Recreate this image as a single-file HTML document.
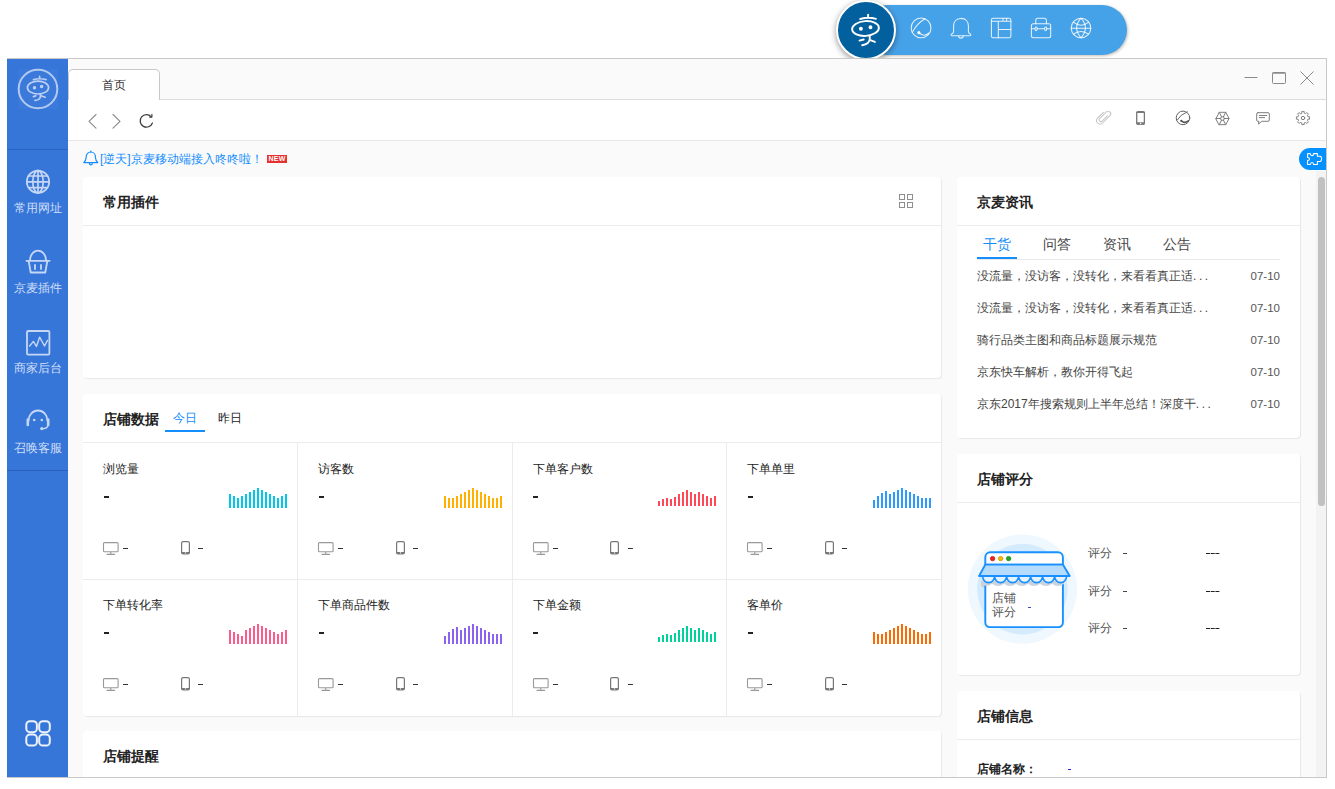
<!DOCTYPE html>
<html lang="zh">
<head>
<meta charset="utf-8">
<title>京麦工作台</title>
<style>
*{box-sizing:border-box;margin:0;padding:0}
html,body{width:1335px;height:789px;overflow:hidden;background:#fff}
body{font-family:"Liberation Sans",sans-serif;font-size:12px;color:#333;position:relative}
.a{position:absolute}
svg{display:block;overflow:visible}
/* floating pill */
#pill{left:862px;top:5px;width:265px;height:50px;border-radius:25px;background:#46a2e8;box-shadow:1px 1px 3px rgba(90,70,40,.35)}
#ball{left:836px;top:-.2px;width:60px;height:60px;border-radius:50%;background:#03609e;border:2.300px solid #fff;box-shadow:0 2px 6px rgba(0,0,0,.42)}
/* window */
#win{left:7px;top:58px;width:1320px;height:720px;overflow:hidden;background:#fafafa}
#pg{left:-7px;top:-58px;width:1335px;height:789px}
#side{left:7px;top:58px;width:61px;height:720px;background:#3776d9}
.lbl{left:7px;width:61px;text-align:center;color:#d0dff8;font-size:12px;line-height:14px;white-space:nowrap}
.ln{background:#c9c9c9}
#tabs{left:68px;top:59px;width:1258px;height:41px;background:#fafafa;border-bottom:1px solid #dcdcdc}
#tab{left:68px;top:69px;width:92px;height:31px;background:#fff;border:1px solid #c8c8c8;border-bottom:none;border-radius:5px 5px 0 0;text-align:center;line-height:31px;font-size:12px;color:#333}
#bar{left:68px;top:100px;width:1258px;height:41px;background:#fff;border-bottom:1px solid #e6e6e6}
.card{background:#fff;border-radius:4px;box-shadow:1px 1px 1px rgba(0,0,0,.075)}
.hd{font-weight:bold;font-size:14px;color:#222;line-height:16px;white-space:nowrap}
.hl{height:1px;background:#ececec}
.vl{width:1px;background:#ececec}
.t{white-space:nowrap;line-height:14px}
</style>
</head>
<body>
<div class="a" id="pill"></div>
<div class="a" id="ball"></div>

<svg class="a" style="left:837px;top:0" width="300" height="60" viewBox="837 0 300 60" fill="none" stroke="#fff" stroke-linecap="round" stroke-linejoin="round">
  <!-- mascot -->
  <g stroke-width="1.9">
    <ellipse cx="865.5" cy="28.5" rx="13.4" ry="7.4" transform="rotate(-4 865.5 28.5)"/>
    <path d="M868.1 14.8v1.8M860.2 19q8-2.4 15.8-.2"/>
    <path d="M869.6 36q.8 4.6-1.8 7-2 1.8-5.6 2.2M859.5 40.6l4.2-1.1M870.3 40.1l4.6 1.8"/>
    <circle cx="860.9" cy="28.8" r="1" fill="#fff"/><circle cx="870.5" cy="27.3" r="1" fill="#fff"/>
  </g>
  <g stroke-width="1.050" stroke-opacity=".85">
    <!-- comet -->
    <circle cx="921.1" cy="27.9" r="9.9"/>
    <path d="M925 18.7Q916.300 23.800 912.300 32.600"/>
    <path d="M918.9 32.6q5 5 10.2.4"/>
    <circle cx="918.900" cy="32.700" r="1.600" fill="#fff" stroke="none"/>
    <!-- bell -->
    <path d="M961 18.4c-4.6 0-7.4 3.2-7.4 7.6v5.6c0 1.2-.6 1.8-1.6 2.2-1.2.5-1.2 2 .2 2h17.6c1.4 0 1.4-1.5.2-2-1-.4-1.6-1-1.6-2.2v-5.600c0-4.400-2.800-7.600-7.400-7.600z"/>
    <path d="M958.600 36a2.400 2.100 0 0 0 4.800 0"/>
    <!-- layout -->
    <rect x="991.400" y="18.300" width="19.500" height="19.400" rx="1.800"/>
    <path d="M991.400 21.300h19.500M998.300 21.300v16.400M998.300 29.400h12.600M1003 18.300v3M1006.600 18.300v3"/>
    <!-- briefcase -->
    <rect x="1031.400" y="23.700" width="19.300" height="14" rx="2"/>
    <path d="M1035.800 23.700v-3.400a2 2 0 0 1 2-2h6.600a2 2 0 0 1 2 2v3.400"/>
    <path d="M1031.400 28.800h3.600M1037.200 28.800h7.400M1046.800 28.800h3.900"/>
    <ellipse cx="1036.100" cy="28.800" rx="1.100" ry="1.900"/><ellipse cx="1045.700" cy="28.800" rx="1.100" ry="1.900"/>
    <!-- globe -->
    <circle cx="1081" cy="28" r="9.800"/>
    <path d="M1081 18.200Q1072.200 28 1081 37.800Q1089.800 28 1081 18.200z"/>
    <path d="M1071.200 28.300h19.600M1073.300 22.200Q1081 28.400 1088.700 22.200M1073.300 34.100Q1081 28.800 1088.700 34.100"/>
  </g>
</svg>

<div class="a" id="win"><div class="a" id="pg">
  <div class="a" id="tabs"></div>
  <div class="a" id="bar"></div>
  <div class="a" id="tab">首页</div>
  <div class="a" id="side"></div>
    <div class="a" style="left:18px;top:69px;width:40px;height:40px;background:#3b79da"></div>
  <div class="a" style="left:7px;top:149px;width:61px;height:1px;background:#2c63c0"></div>
  <div class="a" style="left:7px;top:470px;width:61px;height:1px;background:#2a5fba"></div>
  <svg class="a" style="left:7px;top:58px" width="61" height="720" viewBox="7 58 61 720" fill="none" stroke="#c6d7f5" stroke-width="1.7" stroke-linecap="round" stroke-linejoin="round">
    <!-- logo -->
    <circle cx="38" cy="89" r="19.300" stroke-width="2" stroke="#b3caf0"/>
    <g stroke-width="1.700" stroke="#bcd0f3">
      <ellipse cx="38" cy="87.6" rx="10.6" ry="6.4"/>
      <path d="M39.6 76.4v1.8M33.5 79.6q6.4-1.7 12.6 0"/>
      <path d="M40.4 94.2q.6 3.6-1.6 5.2-1.6 1-3.8 1M33.4 96.6l2.5-.8M41.6 96l3.6 1.3"/>
      <circle cx="34.5" cy="87.7" r=".9" fill="#c6d7f5"/><circle cx="41.6" cy="86.6" r=".9" fill="#c6d7f5"/>
    </g>
    <!-- globe -->
    <g stroke-width="1.7">
      <circle cx="38" cy="181.8" r="11.2"/>
      <ellipse cx="38" cy="181.8" rx="5.2" ry="11.2"/>
      <path d="M38 170.6v22.4M26.8 181.8h22.4M28.6 176h18.8M28.6 187.6h18.8"/>
    </g>
    <!-- basket -->
    <g stroke-width="1.8">
      <path d="M30 260.4a8 9.8 0 0 1 16 0"/>
      <path d="M26.4 260.8h23.2"/>
      <path d="M28.8 261.5l1.9 11h14.6l1.9-11"/>
      <path d="M35 265v4M41 265v4"/>
    </g>
    <!-- chart -->
    <g stroke-width="1.8">
      <rect x="27" y="331" width="22.4" height="23.6" rx="1.2"/>
      <path stroke-width="1.4" d="M29.6 346l3.8-4.6 3 5 3.2-9.2 4.9 8.8 3-5.6"/>
    </g>
    <!-- headset -->
    <g stroke-width="1.8">
      <path d="M28.6 420.5a9.4 10 0 0 1 18.8 0"/>
      <path stroke-width="2.6" d="M27.8 419.5v5.5M48.2 419.5v5.5"/>
      <path stroke-width="1.3" d="M48 425.5q-.6 3-5.6 3.2"/>
      <circle cx="34.2" cy="420" r="1.3" fill="#c6d7f5" stroke="none"/><circle cx="41.8" cy="420" r="1.3" fill="#c6d7f5" stroke="none"/>
      <circle cx="41.800" cy="428.600" r="1.600" fill="#c6d7f5" stroke="none"/>
    </g>
    <!-- apps -->
    <g stroke="#edf2fc" stroke-width="2">
      <rect x="26.3" y="721.2" width="10.6" height="11" rx="3.6"/>
      <rect x="39.2" y="721.2" width="10.6" height="11" rx="3.6"/>
      <rect x="26.3" y="734.6" width="10.6" height="11" rx="3.6"/>
      <rect x="39.2" y="734.6" width="10.6" height="11" rx="3.6"/>
    </g>
  </svg>
  <div class="a lbl" style="top:201px">常用网址</div>
  <div class="a lbl" style="top:281px">京麦插件</div>
  <div class="a lbl" style="top:361px">商家后台</div>
  <div class="a lbl" style="top:441px">召唤客服</div>
  <!--SIDE-->
    <!-- window controls -->
  <svg class="a" style="left:1240px;top:66px" width="80" height="24" viewBox="1240 66 80 24" fill="none" stroke="#8a8a8a" stroke-width="1">
    <path d="M1244.5 77.5h13"/>
    <rect x="1272.5" y="72.5" width="13" height="11" rx="1"/>
    <path d="M1272.500 73.100h13" stroke-width="1.300"/>
    <path d="M1300.5 71.5l13 13M1313.5 71.5l-13 13"/>
  </svg>
  <!-- nav arrows -->
  <svg class="a" style="left:84px;top:110px" width="72" height="22" viewBox="84 110 72 22" fill="none" stroke="#8c8c8c" stroke-width="1.150" stroke-linecap="round" stroke-linejoin="round">
    <path d="M96 114.5l-7 6.8 7 6.8"/>
    <path d="M113 114.5l7 6.8-7 6.8"/>
    <path d="M151.200 116.700a6.300 6.300 0 1 0 1.200 6.300" stroke="#3c3c3c" stroke-width="1.250"/>
    <path d="M151.900 114.200v2.900h-2.300" stroke="#3c3c3c" stroke-width="1.150"/>
  </svg>
  <!-- right toolbar icons -->
  <svg class="a" style="left:1090px;top:106px" width="230" height="26" viewBox="1090 106 230 26" fill="none" stroke="#7d7d7d" stroke-width="1" stroke-linecap="round" stroke-linejoin="round">
    <!-- paperclip -->
    <g stroke="#c2c2c2" stroke-width=".95" transform="translate(1103.600 117) rotate(45)">
      <path d="M-3.500-3.100V5A3.500 3.500 0 0 0 3.500 5V-5.500A2.600 2.600 0 0 0-1.700-5.500V4A1.800 1.800 0 0 0 1.900 4V-3.500"/>
    </g>
    <!-- phone -->
    <rect x="1136.700" y="111.700" width="7.700" height="12.500" rx="1.400" stroke="#777" stroke-width="1.300"/>
    <path d="M1136.700 112.300h7.700" stroke="#777" stroke-width="1.300"/>
    <path d="M1136.300 122.300h8.500v1.400a1.100 1.100 0 0 1-1.100 1.100h-6.300a1.100 1.100 0 0 1-1.100-1.100z" fill="#777" stroke="none"/>
    <circle cx="1140.550" cy="123.500" r=".75" fill="#fff" stroke="none"/>
    <!-- comet circle -->
    <circle cx="1183" cy="117.900" r="6.800" stroke="#666"/>
    <path d="M1187.300 111.800Q1180.300 114.400 1177 120.200" stroke="#666"/>
    <path d="M1181.300 120.900q3.400 3 7-.2" stroke="#555" stroke-width="1.500"/>
    <circle cx="1181.300" cy="120.800" r="1.100" fill="#555" stroke="none"/>
    <!-- hexagon wheel -->
    <path d="M1216 118.500l3.250-6.200h6.500l3.250 6.200-3.250 6.200h-6.500z"/>
    <circle cx="1222.500" cy="118.500" r="1.900"/>
    <path d="M1219.250 112.300l2.300 4.500M1225.750 112.300l-2.300 4.500M1229 118.500h-4.600M1216 118.500h4.600M1219.250 124.700l2.300-4.500M1225.750 124.700l-2.300-4.500"/>
    <!-- chat -->
    <path d="M1257.900 112.700h10.200a1.200 1.200 0 0 1 1.200 1.200v6.200a1.200 1.200 0 0 1-1.200 1.200h-6.300l-3.300 2.800.400-2.800h-1a1.200 1.200 0 0 1-1.200-1.200v-6.200a1.200 1.200 0 0 1 1.200-1.200z"/>
    <path d="M1259.300 115.500h7.400M1259.300 117.600h5.300"/>
    <!-- gear -->
    <g transform="translate(1303 118)" stroke="#7c7c7c" stroke-width=".9" stroke-linejoin="round">
      <path d="M-1.10 -4.98L-1.22 -6.59L1.22 -6.59L1.10 -4.98L2.74 -4.30L3.79 -5.52L5.52 -3.79L4.30 -2.74L4.98 -1.10L6.59 -1.22L6.59 1.22L4.98 1.10L4.30 2.74L5.52 3.79L3.79 5.52L2.74 4.30L1.10 4.98L1.22 6.59L-1.22 6.59L-1.10 4.98L-2.74 4.30L-3.79 5.52L-5.52 3.79L-4.30 2.74L-4.98 1.10L-6.59 1.22L-6.59 -1.22L-4.98 -1.10L-4.30 -2.74L-5.52 -3.79L-3.79 -5.52L-2.74 -4.30z"/>
      <circle r="1.700" stroke-width="1"/>
    </g>
  </svg>
  <!-- puzzle -->
  <div class="a" style="left:1299px;top:148px;width:28px;height:22px;border-radius:11px 0 0 11px;background:#0591ff"></div>
  <svg class="a" style="left:1303px;top:149px" width="24" height="20" viewBox="1303 149 24 20" fill="none" stroke="#fff" stroke-width="1.050" stroke-linejoin="round">
    <path d="M1307.600 153.600H1310.300Q1310.500 155.600 1312 155.600Q1313.500 155.600 1313.600 153.600H1317.400V156.300H1320Q1321.600 156.300 1321.600 158.850Q1321.600 161.400 1320 161.400H1317.400V164.500H1313.600Q1313.500 162.400 1312 162.400Q1310.500 162.400 1310.300 164.500H1307.600V160.400Q1309.500 160.300 1309.500 158.900Q1309.500 157.500 1307.600 157.400Z"/>
  </svg>
  <!-- notice -->
  <svg class="a" style="left:82px;top:150px" width="18" height="17" viewBox="0 0 18 17" fill="none" stroke="#148dfd" stroke-width="1.2" stroke-linecap="round" stroke-linejoin="round">
    <path d="M1.8 12.6c2.4-1.6 2.2-3.4 2.4-6a4.6 4.6 0 0 1 9.2 0c.2 2.6 0 4.4 2.4 6z"/>
    <path d="M7.4 13.4a1.4 1.4 0 0 0 2.8 0M8.8 1.1v.8"/>
  </svg>
  <div class="a t" style="left:100px;top:152px;color:#148dfd;font-size:12px">[逆天]京麦移动端接入咚咚啦！</div>
  <div class="a" style="left:267px;top:155px;width:20px;height:8px;background:#e8312f;color:#fff;font-size:7px;line-height:8px;text-align:center;font-weight:bold;letter-spacing:.2px">NEW</div>
  <!-- scrollbar -->
  <div class="a" style="left:1316px;top:171px;width:10px;height:606px;background:#f3f3f3"></div>
  <div class="a" style="left:1318px;top:177px;width:7px;height:329px;border-radius:3.5px;background:#c1c1c1"></div>
  <!--TOP-->
    <div class="a card" style="left:83px;top:177px;width:858px;height:201px"></div>
  <div class="a hd" style="left:103px;top:194px">常用插件</div>
  <div class="a hl" style="left:83px;top:225px;width:858px"></div>
  <div class="a" style="left:899px;top:194px;width:6px;height:6px;border:1px solid #8e8e8e"></div><div class="a" style="left:907px;top:194px;width:6px;height:6px;border:1px solid #8e8e8e"></div><div class="a" style="left:899px;top:202px;width:6px;height:6px;border:1px solid #8e8e8e"></div><div class="a" style="left:907px;top:202px;width:6px;height:6px;border:1px solid #8e8e8e"></div>
  <div class="a card" style="left:83px;top:394px;width:858px;height:322px"></div>
  <div class="a hd" style="left:103px;top:411px">店铺数据</div>
  <div class="a t" style="left:173px;top:411px;color:#148dfd;font-size:12px">今日</div>
  <div class="a" style="left:165px;top:430px;width:40px;height:2px;background:#148dfd"></div>
  <div class="a t" style="left:218px;top:411px;color:#222;font-size:12px">昨日</div>
  <div class="a hl" style="left:83px;top:442px;width:858px"></div>
  <div class="a hl" style="left:83px;top:579px;width:858px"></div>
  <div class="a vl" style="left:297px;top:443px;height:273px"></div>
  <div class="a vl" style="left:512px;top:443px;height:273px"></div>
  <div class="a vl" style="left:726px;top:443px;height:273px"></div>
  <div class="a t" style="left:103px;top:462px;color:#222">浏览量</div>
  <div class="a" style="left:103.8px;top:496px;width:5px;height:2px;background:#222"></div>
  <svg class="a" style="left:229px;top:488px" width="58" height="20" fill="#00c8eb" shape-rendering="crispEdges"><rect x="0" y="6" width="2" height="14"/><rect x="4" y="8" width="2" height="12"/><rect x="8" y="10" width="2" height="10"/><rect x="12" y="8" width="2" height="12"/><rect x="16" y="6" width="2" height="14"/><rect x="20" y="4" width="2" height="16"/><rect x="24" y="2" width="2" height="18"/><rect x="28" y="0" width="2" height="20"/><rect x="32" y="2" width="2" height="18"/><rect x="36" y="4" width="2" height="16"/><rect x="40" y="6" width="2" height="14"/><rect x="44" y="8" width="2" height="12"/><rect x="48" y="10" width="2" height="10"/><rect x="52" y="8" width="2" height="12"/><rect x="56" y="6" width="2" height="14"/></svg>
  <svg class="a" style="left:103px;top:542px" width="16" height="13" viewBox="0 0 16 13" fill="none" stroke="#999" stroke-width="1.1" stroke-linecap="round"><path d="M1.5.6h12.6a1 1 0 0 1 1 1v7.2a1 1 0 0 1-1 1H1.5a1 1 0 0 1-1-1V1.6a1 1 0 0 1 1-1zM7.8 9.8v2.4M4 12.4h7.6"/></svg>
  <div class="a" style="left:123px;top:548px;width:5px;height:1px;background:#333"></div>
  <svg class="a" style="left:180.5px;top:541px" width="9" height="14" viewBox="0 0 9 14" fill="none" stroke="#777" stroke-width="1.2"><rect x=".6" y=".6" width="7.8" height="12.4" rx="1.5"/><path d="M.7 11h7.6v1a1 1 0 0 1-1 1H1.700a1 1 0 0 1-1-1z" fill="#777" stroke="none"/><circle cx="4.500" cy="11.900" r=".7" fill="#fff" stroke="none"/></svg>
  <div class="a" style="left:198px;top:548px;width:5px;height:1px;background:#333"></div>
  <div class="a t" style="left:318px;top:462px;color:#222">访客数</div>
  <div class="a" style="left:318.8px;top:496px;width:5px;height:2px;background:#222"></div>
  <svg class="a" style="left:444px;top:488px" width="58" height="20" fill="#ffb000" shape-rendering="crispEdges"><rect x="0" y="8" width="2" height="12"/><rect x="4" y="10" width="2" height="10"/><rect x="8" y="10" width="2" height="10"/><rect x="12" y="8" width="2" height="12"/><rect x="16" y="6" width="2" height="14"/><rect x="20" y="4" width="2" height="16"/><rect x="24" y="2" width="2" height="18"/><rect x="28" y="0" width="2" height="20"/><rect x="32" y="2" width="2" height="18"/><rect x="36" y="4" width="2" height="16"/><rect x="40" y="6" width="2" height="14"/><rect x="44" y="8" width="2" height="12"/><rect x="48" y="10" width="2" height="10"/><rect x="52" y="10" width="2" height="10"/><rect x="56" y="8" width="2" height="12"/></svg>
  <svg class="a" style="left:318px;top:542px" width="16" height="13" viewBox="0 0 16 13" fill="none" stroke="#999" stroke-width="1.1" stroke-linecap="round"><path d="M1.5.6h12.6a1 1 0 0 1 1 1v7.2a1 1 0 0 1-1 1H1.5a1 1 0 0 1-1-1V1.6a1 1 0 0 1 1-1zM7.8 9.8v2.4M4 12.4h7.6"/></svg>
  <div class="a" style="left:338px;top:548px;width:5px;height:1px;background:#333"></div>
  <svg class="a" style="left:395.5px;top:541px" width="9" height="14" viewBox="0 0 9 14" fill="none" stroke="#777" stroke-width="1.2"><rect x=".6" y=".6" width="7.8" height="12.4" rx="1.5"/><path d="M.7 11h7.6v1a1 1 0 0 1-1 1H1.700a1 1 0 0 1-1-1z" fill="#777" stroke="none"/><circle cx="4.500" cy="11.900" r=".7" fill="#fff" stroke="none"/></svg>
  <div class="a" style="left:413px;top:548px;width:5px;height:1px;background:#333"></div>
  <div class="a t" style="left:532.5px;top:462px;color:#222">下单客户数</div>
  <div class="a" style="left:533.3px;top:496px;width:5px;height:2px;background:#222"></div>
  <svg class="a" style="left:658px;top:486px" width="58" height="20" fill="#ff4757" shape-rendering="crispEdges"><rect x="0" y="15" width="2" height="5"/><rect x="4" y="13" width="2" height="7"/><rect x="8" y="12" width="2" height="8"/><rect x="12" y="13" width="2" height="7"/><rect x="16" y="11" width="2" height="9"/><rect x="20" y="8" width="2" height="12"/><rect x="24" y="6" width="2" height="14"/><rect x="28" y="4" width="2" height="16"/><rect x="32" y="6" width="2" height="14"/><rect x="36" y="8" width="2" height="12"/><rect x="40" y="6" width="2" height="14"/><rect x="44" y="8" width="2" height="12"/><rect x="48" y="10" width="2" height="10"/><rect x="52" y="12" width="2" height="8"/><rect x="56" y="10" width="2" height="10"/></svg>
  <svg class="a" style="left:532.5px;top:542px" width="16" height="13" viewBox="0 0 16 13" fill="none" stroke="#999" stroke-width="1.1" stroke-linecap="round"><path d="M1.5.6h12.6a1 1 0 0 1 1 1v7.2a1 1 0 0 1-1 1H1.5a1 1 0 0 1-1-1V1.6a1 1 0 0 1 1-1zM7.8 9.8v2.4M4 12.4h7.6"/></svg>
  <div class="a" style="left:552.5px;top:548px;width:5px;height:1px;background:#333"></div>
  <svg class="a" style="left:610px;top:541px" width="9" height="14" viewBox="0 0 9 14" fill="none" stroke="#777" stroke-width="1.2"><rect x=".6" y=".6" width="7.8" height="12.4" rx="1.5"/><path d="M.7 11h7.6v1a1 1 0 0 1-1 1H1.700a1 1 0 0 1-1-1z" fill="#777" stroke="none"/><circle cx="4.500" cy="11.900" r=".7" fill="#fff" stroke="none"/></svg>
  <div class="a" style="left:627.5px;top:548px;width:5px;height:1px;background:#333"></div>
  <div class="a t" style="left:747px;top:462px;color:#222">下单单里</div>
  <div class="a" style="left:747.8px;top:496px;width:5px;height:2px;background:#222"></div>
  <svg class="a" style="left:873px;top:488px" width="58" height="20" fill="#2b9bff" shape-rendering="crispEdges"><rect x="0" y="12" width="2" height="8"/><rect x="4" y="8" width="2" height="12"/><rect x="8" y="5" width="2" height="15"/><rect x="12" y="3" width="2" height="17"/><rect x="16" y="6" width="2" height="14"/><rect x="20" y="4" width="2" height="16"/><rect x="24" y="2" width="2" height="18"/><rect x="28" y="0" width="2" height="20"/><rect x="32" y="2" width="2" height="18"/><rect x="36" y="4" width="2" height="16"/><rect x="40" y="6" width="2" height="14"/><rect x="44" y="8" width="2" height="12"/><rect x="48" y="10" width="2" height="10"/><rect x="52" y="10" width="2" height="10"/><rect x="56" y="10" width="2" height="10"/></svg>
  <svg class="a" style="left:747px;top:542px" width="16" height="13" viewBox="0 0 16 13" fill="none" stroke="#999" stroke-width="1.1" stroke-linecap="round"><path d="M1.5.6h12.6a1 1 0 0 1 1 1v7.2a1 1 0 0 1-1 1H1.5a1 1 0 0 1-1-1V1.6a1 1 0 0 1 1-1zM7.8 9.8v2.4M4 12.4h7.6"/></svg>
  <div class="a" style="left:767px;top:548px;width:5px;height:1px;background:#333"></div>
  <svg class="a" style="left:824.5px;top:541px" width="9" height="14" viewBox="0 0 9 14" fill="none" stroke="#777" stroke-width="1.2"><rect x=".6" y=".6" width="7.8" height="12.4" rx="1.5"/><path d="M.7 11h7.6v1a1 1 0 0 1-1 1H1.700a1 1 0 0 1-1-1z" fill="#777" stroke="none"/><circle cx="4.500" cy="11.900" r=".7" fill="#fff" stroke="none"/></svg>
  <div class="a" style="left:842px;top:548px;width:5px;height:1px;background:#333"></div>
  <div class="a t" style="left:103px;top:598px;color:#222">下单转化率</div>
  <div class="a" style="left:103.8px;top:632px;width:5px;height:2px;background:#222"></div>
  <svg class="a" style="left:229px;top:624px" width="58" height="20" fill="#ff5a8c" shape-rendering="crispEdges"><rect x="0" y="6" width="2" height="14"/><rect x="4" y="8" width="2" height="12"/><rect x="8" y="10" width="2" height="10"/><rect x="12" y="12" width="2" height="8"/><rect x="16" y="6" width="2" height="14"/><rect x="20" y="4" width="2" height="16"/><rect x="24" y="2" width="2" height="18"/><rect x="28" y="0" width="2" height="20"/><rect x="32" y="2" width="2" height="18"/><rect x="36" y="4" width="2" height="16"/><rect x="40" y="6" width="2" height="14"/><rect x="44" y="8" width="2" height="12"/><rect x="48" y="10" width="2" height="10"/><rect x="52" y="8" width="2" height="12"/><rect x="56" y="6" width="2" height="14"/></svg>
  <svg class="a" style="left:103px;top:678px" width="16" height="13" viewBox="0 0 16 13" fill="none" stroke="#999" stroke-width="1.1" stroke-linecap="round"><path d="M1.5.6h12.6a1 1 0 0 1 1 1v7.2a1 1 0 0 1-1 1H1.5a1 1 0 0 1-1-1V1.6a1 1 0 0 1 1-1zM7.8 9.8v2.4M4 12.4h7.6"/></svg>
  <div class="a" style="left:123px;top:684px;width:5px;height:1px;background:#333"></div>
  <svg class="a" style="left:180.5px;top:677px" width="9" height="14" viewBox="0 0 9 14" fill="none" stroke="#777" stroke-width="1.2"><rect x=".6" y=".6" width="7.8" height="12.4" rx="1.5"/><path d="M.7 11h7.6v1a1 1 0 0 1-1 1H1.700a1 1 0 0 1-1-1z" fill="#777" stroke="none"/><circle cx="4.500" cy="11.900" r=".7" fill="#fff" stroke="none"/></svg>
  <div class="a" style="left:198px;top:684px;width:5px;height:1px;background:#333"></div>
  <div class="a t" style="left:318px;top:598px;color:#222">下单商品件数</div>
  <div class="a" style="left:318.8px;top:632px;width:5px;height:2px;background:#222"></div>
  <svg class="a" style="left:444px;top:624px" width="58" height="20" fill="#8a63f0" shape-rendering="crispEdges"><rect x="0" y="12" width="2" height="8"/><rect x="4" y="8" width="2" height="12"/><rect x="8" y="5" width="2" height="15"/><rect x="12" y="3" width="2" height="17"/><rect x="16" y="6" width="2" height="14"/><rect x="20" y="4" width="2" height="16"/><rect x="24" y="2" width="2" height="18"/><rect x="28" y="0" width="2" height="20"/><rect x="32" y="2" width="2" height="18"/><rect x="36" y="4" width="2" height="16"/><rect x="40" y="6" width="2" height="14"/><rect x="44" y="8" width="2" height="12"/><rect x="48" y="10" width="2" height="10"/><rect x="52" y="10" width="2" height="10"/><rect x="56" y="10" width="2" height="10"/></svg>
  <svg class="a" style="left:318px;top:678px" width="16" height="13" viewBox="0 0 16 13" fill="none" stroke="#999" stroke-width="1.1" stroke-linecap="round"><path d="M1.5.6h12.6a1 1 0 0 1 1 1v7.2a1 1 0 0 1-1 1H1.5a1 1 0 0 1-1-1V1.6a1 1 0 0 1 1-1zM7.8 9.8v2.4M4 12.4h7.6"/></svg>
  <div class="a" style="left:338px;top:684px;width:5px;height:1px;background:#333"></div>
  <svg class="a" style="left:395.5px;top:677px" width="9" height="14" viewBox="0 0 9 14" fill="none" stroke="#777" stroke-width="1.2"><rect x=".6" y=".6" width="7.8" height="12.4" rx="1.5"/><path d="M.7 11h7.6v1a1 1 0 0 1-1 1H1.700a1 1 0 0 1-1-1z" fill="#777" stroke="none"/><circle cx="4.500" cy="11.900" r=".7" fill="#fff" stroke="none"/></svg>
  <div class="a" style="left:413px;top:684px;width:5px;height:1px;background:#333"></div>
  <div class="a t" style="left:532.5px;top:598px;color:#222">下单金额</div>
  <div class="a" style="left:533.3px;top:632px;width:5px;height:2px;background:#222"></div>
  <svg class="a" style="left:658px;top:622px" width="58" height="20" fill="#00d29b" shape-rendering="crispEdges"><rect x="0" y="15" width="2" height="5"/><rect x="4" y="13" width="2" height="7"/><rect x="8" y="12" width="2" height="8"/><rect x="12" y="13" width="2" height="7"/><rect x="16" y="11" width="2" height="9"/><rect x="20" y="8" width="2" height="12"/><rect x="24" y="6" width="2" height="14"/><rect x="28" y="4" width="2" height="16"/><rect x="32" y="6" width="2" height="14"/><rect x="36" y="8" width="2" height="12"/><rect x="40" y="6" width="2" height="14"/><rect x="44" y="8" width="2" height="12"/><rect x="48" y="10" width="2" height="10"/><rect x="52" y="12" width="2" height="8"/><rect x="56" y="10" width="2" height="10"/></svg>
  <svg class="a" style="left:532.5px;top:678px" width="16" height="13" viewBox="0 0 16 13" fill="none" stroke="#999" stroke-width="1.1" stroke-linecap="round"><path d="M1.5.6h12.6a1 1 0 0 1 1 1v7.2a1 1 0 0 1-1 1H1.5a1 1 0 0 1-1-1V1.6a1 1 0 0 1 1-1zM7.8 9.8v2.4M4 12.4h7.6"/></svg>
  <div class="a" style="left:552.5px;top:684px;width:5px;height:1px;background:#333"></div>
  <svg class="a" style="left:610px;top:677px" width="9" height="14" viewBox="0 0 9 14" fill="none" stroke="#777" stroke-width="1.2"><rect x=".6" y=".6" width="7.8" height="12.4" rx="1.5"/><path d="M.7 11h7.6v1a1 1 0 0 1-1 1H1.700a1 1 0 0 1-1-1z" fill="#777" stroke="none"/><circle cx="4.500" cy="11.900" r=".7" fill="#fff" stroke="none"/></svg>
  <div class="a" style="left:627.5px;top:684px;width:5px;height:1px;background:#333"></div>
  <div class="a t" style="left:747px;top:598px;color:#222">客单价</div>
  <div class="a" style="left:747.8px;top:632px;width:5px;height:2px;background:#222"></div>
  <svg class="a" style="left:873px;top:624px" width="58" height="20" fill="#ff6a00" shape-rendering="crispEdges"><rect x="0" y="8" width="2" height="12"/><rect x="4" y="10" width="2" height="10"/><rect x="8" y="10" width="2" height="10"/><rect x="12" y="8" width="2" height="12"/><rect x="16" y="6" width="2" height="14"/><rect x="20" y="4" width="2" height="16"/><rect x="24" y="2" width="2" height="18"/><rect x="28" y="0" width="2" height="20"/><rect x="32" y="2" width="2" height="18"/><rect x="36" y="4" width="2" height="16"/><rect x="40" y="6" width="2" height="14"/><rect x="44" y="8" width="2" height="12"/><rect x="48" y="10" width="2" height="10"/><rect x="52" y="10" width="2" height="10"/><rect x="56" y="8" width="2" height="12"/></svg>
  <svg class="a" style="left:747px;top:678px" width="16" height="13" viewBox="0 0 16 13" fill="none" stroke="#999" stroke-width="1.1" stroke-linecap="round"><path d="M1.5.6h12.6a1 1 0 0 1 1 1v7.2a1 1 0 0 1-1 1H1.5a1 1 0 0 1-1-1V1.6a1 1 0 0 1 1-1zM7.8 9.8v2.4M4 12.4h7.6"/></svg>
  <div class="a" style="left:767px;top:684px;width:5px;height:1px;background:#333"></div>
  <svg class="a" style="left:824.5px;top:677px" width="9" height="14" viewBox="0 0 9 14" fill="none" stroke="#777" stroke-width="1.2"><rect x=".6" y=".6" width="7.8" height="12.4" rx="1.5"/><path d="M.7 11h7.6v1a1 1 0 0 1-1 1H1.700a1 1 0 0 1-1-1z" fill="#777" stroke="none"/><circle cx="4.500" cy="11.900" r=".7" fill="#fff" stroke="none"/></svg>
  <div class="a" style="left:842px;top:684px;width:5px;height:1px;background:#333"></div>
  <div class="a card" style="left:83px;top:731px;width:858px;height:80px"></div>
  <div class="a hd" style="left:103px;top:748px">店铺提醒</div>
  <!--MAIN-->
    <div class="a card" style="left:957px;top:177px;width:343px;height:261px"></div>
  <div class="a hd" style="left:977px;top:194px">京麦资讯</div>
  <div class="a hl" style="left:957px;top:225px;width:343px"></div>
  <div class="a t" style="left:983px;top:235px;font-size:14px;line-height:18px;color:#148dfd">干货</div>
  <div class="a t" style="left:1043px;top:235px;font-size:14px;line-height:18px;color:#444">问答</div>
  <div class="a t" style="left:1103px;top:235px;font-size:14px;line-height:18px;color:#444">资讯</div>
  <div class="a t" style="left:1163px;top:235px;font-size:14px;line-height:18px;color:#444">公告</div>
  <div class="a" style="left:977px;top:259px;width:303px;height:1px;background:#e8e8e8"></div>
  <div class="a" style="left:977px;top:257px;width:40px;height:2px;background:#148dfd"></div>
  <div class="a t" style="left:977px;top:269px;color:#444">没流量，没访客，没转化，来看看真正适<span style="letter-spacing:2.6px">...</span></div>
  <div class="a t" style="left:1240px;top:269px;width:40px;text-align:right;color:#555;font-size:11.5px">07-10</div>
  <div class="a t" style="left:977px;top:301px;color:#444">没流量，没访客，没转化，来看看真正适<span style="letter-spacing:2.6px">...</span></div>
  <div class="a t" style="left:1240px;top:301px;width:40px;text-align:right;color:#555;font-size:11.5px">07-10</div>
  <div class="a t" style="left:977px;top:333px;color:#444">骑行品类主图和商品标题展示规范</div>
  <div class="a t" style="left:1240px;top:333px;width:40px;text-align:right;color:#555;font-size:11.5px">07-10</div>
  <div class="a t" style="left:977px;top:365px;color:#444">京东快车解析，教你开得飞起</div>
  <div class="a t" style="left:1240px;top:365px;width:40px;text-align:right;color:#555;font-size:11.5px">07-10</div>
  <div class="a t" style="left:977px;top:397px;color:#444">京东2017年搜索规则上半年总结！深度干<span style="letter-spacing:2.6px">...</span></div>
  <div class="a t" style="left:1240px;top:397px;width:40px;text-align:right;color:#555;font-size:11.5px">07-10</div>
  <div class="a card" style="left:957px;top:454px;width:343px;height:221px"></div>
  <div class="a hd" style="left:977px;top:471px">店铺评分</div>
  <div class="a hl" style="left:957px;top:502px;width:343px"></div>
  <svg class="a" style="left:965px;top:532px" width="116" height="116" viewBox="965 532 116 116" fill="none" stroke="#1890ff" stroke-width="1.900" stroke-linejoin="round">
    <circle cx="1022.4" cy="589.1" r="54.7" fill="#f0f8ff" stroke="none"/>
    <circle cx="1022.4" cy="589.1" r="45.3" fill="#d4ebfd" stroke="none"/>
    <path d="M981 583.5h83v2.6q-3 2.6-6 2.6t-6-2.6q-3 2.6-6 2.6t-6-2.6q-3 2.6-6 2.6t-6-2.6q-3 2.6-6 2.6t-6-2.6q-3 2.6-6 2.6t-6-2.6q-3 2.6-6 2.6t-6-2.6q-3 2.6-5.5 2.6t-5.5-2.6z" fill="#c9d3e0" stroke="none"/>
    <path d="M985.3 576v46.6a4.5 4.5 0 0 0 4.5 4.5h68.6a4.5 4.5 0 0 0 4.5-4.5V576z" fill="#fff"/>
    <path d="M981 580.5h83v3.2q-3 2.4-6 2.4t-6-2.4q-3 2.4-6 2.4t-6-2.4q-3 2.4-6 2.4t-6-2.4q-3 2.4-6 2.4t-6-2.4q-3 2.4-6 2.4t-6-2.4q-3 2.4-6 2.4t-6-2.4q-3 2.4-5.5 2.4t-5.5-2.4z" fill="#c9d3e0" stroke="none"/>
    <path d="M985.3 564.6v-7.4a5 5 0 0 1 5-5h67.6a5 5 0 0 1 5 5v7.4z" fill="#fff"/>
    <g fill="#e6f3fe" stroke-width="1.600">
      <path d="M982.6 576a6 6.6 0 0 0 12 0zM994.6 576a6 6.6 0 0 0 12 0zM1006.6 576a6 6.6 0 0 0 12 0zM1018.6 576a6 6.6 0 0 0 12 0zM1030.6 576a6 6.6 0 0 0 12 0zM1042.6 576a6 6.6 0 0 0 12 0zM1054.6 576a6 6.6 0 0 0 12 0z"/>
    </g>
    <path d="M985.3 564.6h77.6l6.8 11.4h-90.6z" fill="#b5dcfc"/>
    <circle cx="992.6" cy="558.600" r="2.200" fill="#e8241c" stroke="#b81d16" stroke-width=".8"/>
    <circle cx="1000.6" cy="558.600" r="2.200" fill="#f5b800" stroke="#c79500" stroke-width=".8"/>
    <circle cx="1008.6" cy="558.600" r="2.200" fill="#21a81f" stroke="#1b8619" stroke-width=".8"/>
  </svg>
  <div class="a t" style="left:992px;top:592px;color:#555;line-height:13.5px">店铺<br>评分</div>
  <div class="a" style="left:1028px;top:607px;width:3px;height:1px;background:#3b4fb8"></div>
  <div class="a t" style="left:1088px;top:546px;color:#555">评分</div>
  <div class="a" style="left:1123px;top:553px;width:3.500px;height:1px;background:#444"></div>
  <div class="a" style="left:1206px;top:553px;width:3.700px;height:1px;background:#222;box-shadow:4.700px 0 0 #222,9.400px 0 0 #222"></div>
  <div class="a t" style="left:1088px;top:584px;color:#555">评分</div>
  <div class="a" style="left:1123px;top:591px;width:3.500px;height:1px;background:#444"></div>
  <div class="a" style="left:1206px;top:591px;width:3.700px;height:1px;background:#222;box-shadow:4.700px 0 0 #222,9.400px 0 0 #222"></div>
  <div class="a t" style="left:1088px;top:621px;color:#555">评分</div>
  <div class="a" style="left:1123px;top:628px;width:3.500px;height:1px;background:#444"></div>
  <div class="a" style="left:1206px;top:628px;width:3.700px;height:1px;background:#222;box-shadow:4.700px 0 0 #222,9.400px 0 0 #222"></div>
  <div class="a card" style="left:957px;top:691px;width:343px;height:120px"></div>
  <div class="a hd" style="left:977px;top:708px">店铺信息</div>
  <div class="a hl" style="left:957px;top:739px;width:343px"></div>
  <div class="a t" style="left:977px;top:762px;color:#222;font-weight:bold">店铺名称：</div>
  <div class="a" style="left:1068px;top:769px;width:3px;height:1px;background:#2222dd"></div>
  <!--RIGHT-->
</div></div>
<!-- window frame lines -->
<div class="a ln" style="left:7px;top:58px;width:1320px;height:1px"></div>
<div class="a ln" style="left:1326px;top:58px;width:1px;height:720px"></div>
<div class="a ln" style="left:7px;top:777px;width:1320px;height:1px"></div>
</body>
</html>
